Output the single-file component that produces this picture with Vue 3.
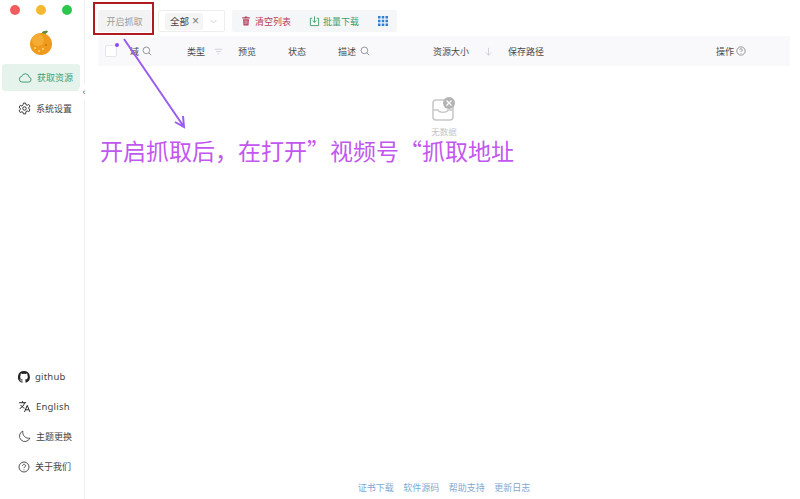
<script setup>
const columns = [
  { label: '域', w: 57, icon: 'search', gap: 3 },
  { label: '类型', w: 51, icon: 'filter', gap: 9 },
  { label: '预览', w: 50 },
  { label: '状态', w: 50 },
  { label: '描述', w: 95, icon: 'search', gap: 4 },
  { label: '资源大小', w: 75, icon: 'down', gap: 15 },
  { label: '保存路径', w: 208 },
  { label: '操作', w: 40, icon: 'help', gap: 2 },
]
const footer = ['证书下载', '软件源码', '帮助支持', '更新日志']
</script>

<template>
  <div class="app">
    <aside class="sidebar">
      <div class="lights">
        <i class="light red"></i><i class="light yellow"></i><i class="light green"></i>
      </div>
      <svg class="logo" viewBox="0 0 24 26" width="24" height="26">
        <path d="M12 5c1-3 4-4 7-3-1 3-4 4-7 3z" fill="#5b8a3a"/>
        <circle cx="12" cy="15" r="11" fill="#ee9a1c"/>
        <circle cx="9" cy="11" r="6" fill="#f6b53c" opacity=".7"/>
        <circle cx="6" cy="19" r="1" fill="#ffd778"/><circle cx="10" cy="22" r="1" fill="#ffd778"/>
        <circle cx="14" cy="20" r="1" fill="#ffd778"/><circle cx="17" cy="16" r="1" fill="#c8700c"/>
      </svg>
      <nav class="nav">
        <div class="nav-item active">
          <svg viewBox="0 0 24 24" width="14" height="14" fill="none" stroke="currentColor" stroke-width="1.7"><path d="M7 19a5 5 0 0 1-.6-9.900A6.500 6.500 0 0 1 19 10.500a4.300 4.300 0 0 1-1 8.500z"/></svg>
          <span>获取资源</span>
        </div>
        <div class="nav-item">
          <svg viewBox="0 0 24 24" width="13" height="13" fill="none" stroke="#333" stroke-width="1.8"><circle cx="12" cy="12" r="3.200"/><path d="M10 2h4l.6 3 2.500 1.100 2.600-1.600 2.500 3.500-2.300 2 .1 2.500 2.200 2-2.400 3.500-2.700-1.500-2.300 1L14 22h-4l-.6-3-2.300-1-2.700 1.500L2 16l2.200-2 .1-2.500-2.300-2L4.500 6l2.600 1.500L9.400 5z"/></svg>
          <span>系统设置</span>
        </div>
      </nav>
      <button class="collapse">‹</button>
      <div class="bottom">
        <div class="nav-item">
          <svg viewBox="0 0 16 16" width="12" height="12" fill="#222"><path d="M8 0a8 8 0 0 0-2.500 15.600c.4.100.5-.2.500-.4v-1.400c-2.200.5-2.700-1-2.700-1-.4-.9-.9-1.200-.9-1.200-.7-.5.100-.5.100-.5.800.1 1.200.8 1.200.8.700 1.200 1.900.9 2.300.7.100-.5.300-.9.500-1.100-1.800-.2-3.600-.9-3.600-4 0-.9.300-1.600.8-2.100-.1-.2-.4-1 .1-2.100 0 0 .7-.2 2.200.8a7.600 7.600 0 0 1 4 0c1.500-1 2.200-.8 2.200-.8.400 1.100.2 1.900.1 2.100.5.600.8 1.300.8 2.100 0 3.100-1.900 3.700-3.700 3.900.3.300.6.800.6 1.500v2.200c0 .2.100.5.600.4A8 8 0 0 0 8 0z"/></svg>
          <span class="latin">github</span>
        </div>
        <div class="nav-item">
          <svg viewBox="0 0 24 24" width="13" height="13" fill="none" stroke="#222" stroke-width="1.800"><path d="M2 5h13M8.500 2v3M12 5c-1 5-4.500 9-9 11M5 9c1.500 3 4 5 7 6M12 22l5-12 5 12M14 18h6"/></svg>
          <span class="latin">English</span>
        </div>
        <div class="nav-item">
          <svg viewBox="0 0 24 24" width="13" height="13" fill="none" stroke="#333" stroke-width="1.500"><path d="M9 2a10 10 0 1 0 13 13A11 11 0 0 1 9 2z"/></svg>
          <span>主题更换</span>
        </div>
        <div class="nav-item">
          <svg viewBox="0 0 24 24" width="12" height="12" fill="none" stroke="#333" stroke-width="1.700"><circle cx="12" cy="12" r="10"/><path d="M9 9.500a3 3 0 1 1 4.500 2.600c-1 .6-1.500 1.200-1.500 2.400M12 17v1.500"/></svg>
          <span>关于我们</span>
        </div>
      </div>
    </aside>

    <main class="main">
      <div class="toolbar">
        <button class="capture">开启抓取</button>
        <div class="select">
          <span class="tag"><span>全部</span><em>×</em></span>
          <svg viewBox="0 0 12 12" width="9" height="9" fill="none" stroke="#c4c4c4" stroke-width="1"><path d="M2 4l4 4 4-4"/></svg>
        </div>
        <div class="actions">
          <span class="action danger">
            <svg viewBox="0 0 24 24" width="10" height="12" fill="#b8405e"><path d="M9 1h6v2h6v3H3V3h6zM5 8h14l-1 15H6zM9 10v10h1.500V10zm4.500 0v10H15V10z"/></svg>
            清空列表
          </span>
          <span class="action success">
            <svg viewBox="0 0 24 24" width="11" height="12" fill="none" stroke="#3f9f6a" stroke-width="2"><path d="M7 6H3v16h18V6h-4M12 2v13M8 11l4 4 4-4"/></svg>
            批量下载
          </span>
          <svg class="grid-icon" viewBox="0 0 12 12" width="10" height="10" fill="#2f7fd6">
            <rect width="3" height="3"/><rect x="4.500" width="3" height="3"/><rect x="9" width="3" height="3"/>
            <rect y="4.500" width="3" height="3"/><rect x="4.500" y="4.500" width="3" height="3"/><rect x="9" y="4.500" width="3" height="3"/>
            <rect y="9" width="3" height="3"/><rect x="4.500" y="9" width="3" height="3"/><rect x="9" y="9" width="3" height="3"/>
          </svg>
        </div>
      </div>

      <div class="thead">
        <span class="check"></span>
        <div v-for="c in columns" :key="c.label" class="th" :style="{ width: c.w + 'px', gap: (c.gap || 0) + 'px' }">
          <span>{{ c.label }}</span>
          <svg v-if="c.icon === 'search'" viewBox="0 0 24 24" width="10" height="10" fill="none" stroke="#777" stroke-width="1.800"><circle cx="10.500" cy="10.500" r="8"/><path d="M16.500 16.500L22 22"/></svg>
          <svg v-else-if="c.icon === 'filter'" viewBox="0 0 12 12" width="9" height="9" fill="none" stroke="#c4c6cc" stroke-width="1"><path d="M1 3h10M3 6h6M5 9h2"/></svg>
          <svg v-else-if="c.icon === 'down'" viewBox="0 0 12 12" width="9" height="9" fill="none" stroke="#c4c6cc" stroke-width="1"><path d="M6 1v10M2.500 7.500L6 11l3.500-3.500"/></svg>
          <svg v-else-if="c.icon === 'help'" viewBox="0 0 24 24" width="10" height="10" fill="none" stroke="#666" stroke-width="1.600"><circle cx="12" cy="12" r="10"/><path d="M9 9.500a3 3 0 1 1 4.500 2.600c-1 .6-1.500 1.200-1.500 2.400M12 17v1.500"/></svg>
        </div>
      </div>

      <div class="empty">
        <svg viewBox="0 0 24 24" width="24" height="24">
          <rect x="1" y="3" width="20" height="20" rx="3" fill="none" stroke="#c8c8c8" stroke-width="1.500"/>
          <path d="M1 13h5c1 3 9 3 10 0h5" fill="none" stroke="#c8c8c8" stroke-width="1.500"/>
          <circle cx="17" cy="6" r="6" fill="#b4b4b4"/>
          <path d="M14.500 3.500l5 5M19.500 3.500l-5 5" stroke="#fff" stroke-width="1.200"/>
        </svg>
        <span>无数据</span>
      </div>

      <footer class="footer">
        <a v-for="f in footer" :key="f">{{ f }}</a>
      </footer>
    </main>

    <div class="red-box"></div>
    <i class="dot"></i>
    <svg class="arrow" viewBox="0 0 70 95" width="70" height="95" fill="none" stroke="#9a5cf0" stroke-width="2">
      <path d="M2 2l60 88M53 85l9 5-1-11"/>
    </svg>
    <div class="note">开启抓取后，在打开”视频号“抓取地址</div>
  </div>
</template>

<style>
html, body { margin: 0; background: #fff; }
</style>

<style scoped>
.app {
  position: relative;
  display: flex;
  width: 800px;
  height: 499px;
  overflow: hidden;
  background: #fff;
  font-family: "Noto Sans CJK SC", "Noto Sans", sans-serif;
  color: #444;
  font-size: 9px;
}
.sidebar {
  position: relative;
  flex: none;
  width: 85px;
  display: flex;
  flex-direction: column;
  align-items: flex-start;
  padding-left: 2px;
  border-right: 1px solid #f1f1f3;
  box-sizing: border-box;
}
.lights { display: flex; gap: 16px; padding: 5px 0 0 8px; height: 24px; box-sizing: border-box; }
.light { width: 10px; height: 10px; border-radius: 50%; }
.red { background: #f45b5f; }
.yellow { background: #f8b733; }
.green { background: #2cc84d; }
.logo { margin: 5px 0 0 27px; }
.nav { display: flex; flex-direction: column; gap: 4px; margin-top: 9px; width: 78px; }
.nav-item {
  display: flex;
  align-items: center;
  gap: 5px;
  height: 27px;
  padding-left: 16px;
  border-radius: 3px;
  color: #444;
  white-space: nowrap;
}
.active { background: #e5f3ec; color: #3f9f74; }
.latin { font-family: "Noto Sans", sans-serif; font-size: 9.500px; letter-spacing: .2px; }
.collapse {
  position: absolute;
  top: 85px;
  right: -6px;
  width: 12px;
  height: 14px;
  padding: 0;
  border: 0;
  border-radius: 50%;
  background: #fff;
  color: #555;
  font-size: 9px;
  line-height: 14px;
}
.bottom {
  margin-top: auto;
  margin-bottom: 19px;
  width: 78px;
  display: flex;
  flex-direction: column;
  gap: 3px;
}
.main {
  flex: 1;
  min-width: 0;
  display: flex;
  flex-direction: column;
  padding: 10px 10px 0 13px;
}
.toolbar { display: flex; align-items: center; height: 22px; }
.capture {
  width: 53px;
  height: 22px;
  padding: 0;
  border: 0;
  border-radius: 2px;
  background: #f3f3f4;
  color: #9a9a9a;
  font: inherit;
}
.select {
  display: flex;
  align-items: center;
  justify-content: space-between;
  box-sizing: border-box;
  width: 67px;
  height: 22px;
  margin-left: 7px;
  padding: 0 6px;
  border: 1px solid #eeeeef;
  border-radius: 2px;
}
.tag {
  display: flex;
  align-items: center;
  gap: 3px;
  width: 38px;
  box-sizing: border-box;
  height: 17px;
  padding: 0 4px 0 5px;
  background: #f5f5f5;
  border-radius: 2px;
  color: #444;
  font-size: 9.500px;
  white-space: nowrap;
}
.tag em { font-family: "Liberation Sans", sans-serif; font-style: normal; font-size: 12px; color: #777; }
.actions {
  display: flex;
  align-items: center;
  box-sizing: border-box;
  width: 165px;
  height: 22px;
  margin-left: 7px;
  padding-left: 9px;
  background: #f5f6f8;
  border-radius: 2px;
}
.action { display: flex; align-items: center; gap: 4px; white-space: nowrap; }
.danger { color: #b8405e; }
.success { color: #3f9f6a; margin-left: 18px; gap: 3px; }
.grid-icon { margin-left: 19px; }
.thead {
  display: flex;
  align-items: center;
  height: 30px;
  margin-top: 4px;
  padding-left: 7px;
  background: #f9f9fb;
  color: #4a4a4a;
}
.check {
  flex: none;
  box-sizing: border-box;
  width: 12px;
  height: 12px;
  margin-right: 13px;
  border: 1px solid #e6e6e8;
  border-radius: 2px;
  background: #fff;
}
.th { display: flex; align-items: center; flex: none; white-space: nowrap; }
.empty {
  display: flex;
  flex-direction: column;
  align-items: center;
  gap: 5px;
  margin-top: 31px;
  color: #c4c4c4;
  font-size: 8.500px;
  line-height: 11px;
}
.footer {
  margin-top: auto;
  display: flex;
  justify-content: center;
  gap: 9.500px;
  padding-bottom: 1px;
  height: 17px;
  color: #7fa8cf;
}
.red-box {
  position: absolute;
  left: 93px;
  top: 2px;
  width: 61px;
  height: 33px;
  box-sizing: border-box;
  border: 2px solid #b01a22;
}
.dot {
  position: absolute;
  left: 115px;
  top: 43px;
  width: 4px;
  height: 4px;
  border-radius: 50%;
  background: #8a4cf0;
}
.arrow { position: absolute; left: 122px; top: 37px; }
.note {
  position: absolute;
  left: 100px;
  top: 138px;
  font-size: 23px;
  line-height: 24px;
  font-weight: 400;
  color: #c257ef;
  white-space: nowrap;
}
</style>
